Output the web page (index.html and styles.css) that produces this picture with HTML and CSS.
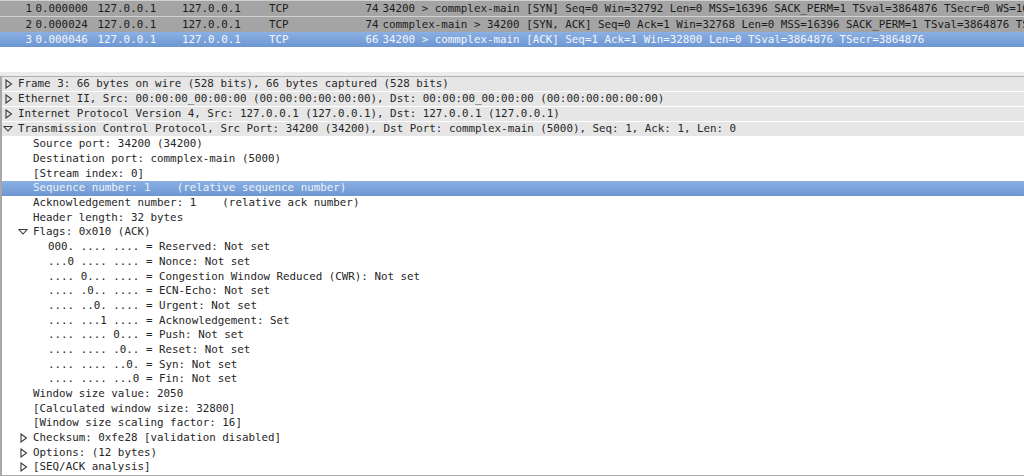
FILE: index.html
```html
<!DOCTYPE html>
<html>
<head>
<meta charset="utf-8">
<link rel="stylesheet" href="styles.css">
</head>
<body>
<div class="plist">
  <div class="prow grey">
    <span class="c-no">1</span><span class="c-time">0.000000</span><span class="c-src">127.0.0.1</span><span class="c-dst">127.0.0.1</span><span class="c-proto">TCP</span><span class="c-len">74</span><span class="c-info">34200 &gt; commplex-main [SYN] Seq=0 Win=32792 Len=0 MSS=16396 SACK_PERM=1 TSval=3864876 TSecr=0 WS=16</span>
  </div>
  <div class="prow grey">
    <span class="c-no">2</span><span class="c-time">0.000024</span><span class="c-src">127.0.0.1</span><span class="c-dst">127.0.0.1</span><span class="c-proto">TCP</span><span class="c-len">74</span><span class="c-info">commplex-main &gt; 34200 [SYN, ACK] Seq=0 Ack=1 Win=32768 Len=0 MSS=16396 SACK_PERM=1 TSval=3864876 TSecr=0 WS=16</span>
  </div>
  <div class="prow sel">
    <span class="c-no">3</span><span class="c-time">0.000046</span><span class="c-src">127.0.0.1</span><span class="c-dst">127.0.0.1</span><span class="c-proto">TCP</span><span class="c-len">66</span><span class="c-info">34200 &gt; commplex-main [ACK] Seq=1 Ack=1 Win=32800 Len=0 TSval=3864876 TSecr=3864876</span>
  </div>
</div>
<div class="gap"></div>
<div class="splitter"><span class="grip"></span></div>
<div class="tree">
  <div class="trow top"><span class="exp"><svg class="tri-r" width="8" height="10" viewBox="0 0 8 10"><polygon points="1,1 6.5,5 1,9" /></svg></span><span class="txt">Frame 3: 66 bytes on wire (528 bits), 66 bytes captured (528 bits)</span></div>
  <div class="trow top"><span class="exp"><svg class="tri-r" width="8" height="10" viewBox="0 0 8 10"><polygon points="1,1 6.5,5 1,9" /></svg></span><span class="txt">Ethernet II, Src: 00:00:00_00:00:00 (00:00:00:00:00:00), Dst: 00:00:00_00:00:00 (00:00:00:00:00:00)</span></div>
  <div class="trow top"><span class="exp"><svg class="tri-r" width="8" height="10" viewBox="0 0 8 10"><polygon points="1,1 6.5,5 1,9" /></svg></span><span class="txt">Internet Protocol Version 4, Src: 127.0.0.1 (127.0.0.1), Dst: 127.0.0.1 (127.0.0.1)</span></div>
  <div class="trow top"><span class="exp"><svg class="tri-d" width="10" height="8" viewBox="0 0 10 8"><polygon points="1,1.5 9,1.5 5,6" /></svg></span><span class="txt">Transmission Control Protocol, Src Port: 34200 (34200), Dst Port: commplex-main (5000), Seq: 1, Ack: 1, Len: 0</span></div>

  <div class="trow l1"><span class="exp"></span><span class="txt">Source port: 34200 (34200)</span></div>
  <div class="trow l1"><span class="exp"></span><span class="txt">Destination port: commplex-main (5000)</span></div>
  <div class="trow l1"><span class="exp"></span><span class="txt">[Stream index: 0]</span></div>
  <div class="trow l1 hl"><span class="exp"></span><span class="txt">Sequence number: 1    (relative sequence number)</span></div>
  <div class="trow l1"><span class="exp"></span><span class="txt">Acknowledgement number: 1    (relative ack number)</span></div>
  <div class="trow l1"><span class="exp"></span><span class="txt">Header length: 32 bytes</span></div>
  <div class="trow l1"><span class="exp"><svg class="tri-d" width="10" height="8" viewBox="0 0 10 8"><polygon points="1,1.5 9,1.5 5,6" /></svg></span><span class="txt">Flags: 0x010 (ACK)</span></div>

  <div class="trow l2"><span class="exp"></span><span class="txt">000. .... .... = Reserved: Not set</span></div>
  <div class="trow l2"><span class="exp"></span><span class="txt">...0 .... .... = Nonce: Not set</span></div>
  <div class="trow l2"><span class="exp"></span><span class="txt">.... 0... .... = Congestion Window Reduced (CWR): Not set</span></div>
  <div class="trow l2"><span class="exp"></span><span class="txt">.... .0.. .... = ECN-Echo: Not set</span></div>
  <div class="trow l2"><span class="exp"></span><span class="txt">.... ..0. .... = Urgent: Not set</span></div>
  <div class="trow l2"><span class="exp"></span><span class="txt">.... ...1 .... = Acknowledgement: Set</span></div>
  <div class="trow l2"><span class="exp"></span><span class="txt">.... .... 0... = Push: Not set</span></div>
  <div class="trow l2"><span class="exp"></span><span class="txt">.... .... .0.. = Reset: Not set</span></div>
  <div class="trow l2"><span class="exp"></span><span class="txt">.... .... ..0. = Syn: Not set</span></div>
  <div class="trow l2"><span class="exp"></span><span class="txt">.... .... ...0 = Fin: Not set</span></div>

  <div class="trow l1"><span class="exp"></span><span class="txt">Window size value: 2050</span></div>
  <div class="trow l1"><span class="exp"></span><span class="txt">[Calculated window size: 32800]</span></div>
  <div class="trow l1"><span class="exp"></span><span class="txt">[Window size scaling factor: 16]</span></div>
  <div class="trow l1"><span class="exp"><svg class="tri-r" width="8" height="10" viewBox="0 0 8 10"><polygon points="1,1 6.5,5 1,9" /></svg></span><span class="txt">Checksum: 0xfe28 [validation disabled]</span></div>
  <div class="trow l1"><span class="exp"><svg class="tri-r" width="8" height="10" viewBox="0 0 8 10"><polygon points="1,1 6.5,5 1,9" /></svg></span><span class="txt">Options: (12 bytes)</span></div>
  <div class="trow l1"><span class="exp"><svg class="tri-r" width="8" height="10" viewBox="0 0 8 10"><polygon points="1,1 6.5,5 1,9" /></svg></span><span class="txt">[SEQ/ACK analysis]</span></div>
</div>
</body>
</html>
```

FILE: styles.css
```css
html, body {
  margin: 0;
  padding: 0;
  background: #ffffff;
  overflow: hidden;
}

body {
  width: 1024px;
  height: 476px;
  font-family: "DejaVu Sans Mono", monospace;
  font-size: 10.85px;
  color: #262626;
}

.plist {
  display: flex;
  flex-direction: column;
}

.prow {
  display: grid;
  grid-template-columns: 32px 65.5px 84.5px 87px 60px 49.5px 1fr;
  height: 15px;
  line-height: 15px;
  white-space: pre;
  overflow: hidden;
}

.prow span {
  overflow: hidden;
}

.prow.grey {
  background: #a4a4a4;
  border-top: 1px solid #d2d2d2;
  color: #1c1c1c;
}

.prow.sel {
  background: linear-gradient(#8ab0e4, #6d96d1);
  color: #f2f5fb;
}

.c-no { text-align: right; }
.c-time { padding-left: 3.5px; }
.c-len { text-align: right; }
.c-info { padding-left: 4px; overflow: visible !important; }

.gap {
  height: 25px;
}

.splitter {
  height: 4px;
  background: #ececec;
  display: flex;
  justify-content: center;
  align-items: flex-start;
}

.grip {
  width: 40px;
  height: 2px;
  margin-left: 12px;
  background-image: radial-gradient(circle, #c4c4c4 0.6px, transparent 0.7px);
  background-size: 2px 2px;
}

.tree {
  height: 400px;
  box-sizing: border-box;
  border-top: 1px solid #b0b0b0;
  border-left: 2px solid #a8a8a8;
  border-bottom: 1px solid #a8a8a8;
  overflow: hidden;
}

.trow {
  display: flex;
  align-items: center;
  white-space: pre;
  padding-left: 1px;
}

.trow.top {
  height: 14px;
  margin-bottom: 1px;
  background: #e6e6e6;
}

.trow.l1,
.trow.l2 {
  height: 14.7px;
}

.trow.l1 { padding-left: 16px; }
.trow.l2 { padding-left: 31px; }

.trow.hl {
  background: linear-gradient(#8ab0e4, #6d96d1);
  color: #eef2fa;
}

.exp {
  width: 15px;
  flex: none;
  display: flex;
  align-items: center;
  height: 100%;
}

.tri-r {
  margin-left: 2px;
}

.tri-d {
  margin-left: 0px;
}

.exp polygon {
  fill: none;
  stroke: #3a3a3a;
  stroke-width: 1.1;
  stroke-linejoin: miter;
}

.txt {
  line-height: 14px;
}
```
